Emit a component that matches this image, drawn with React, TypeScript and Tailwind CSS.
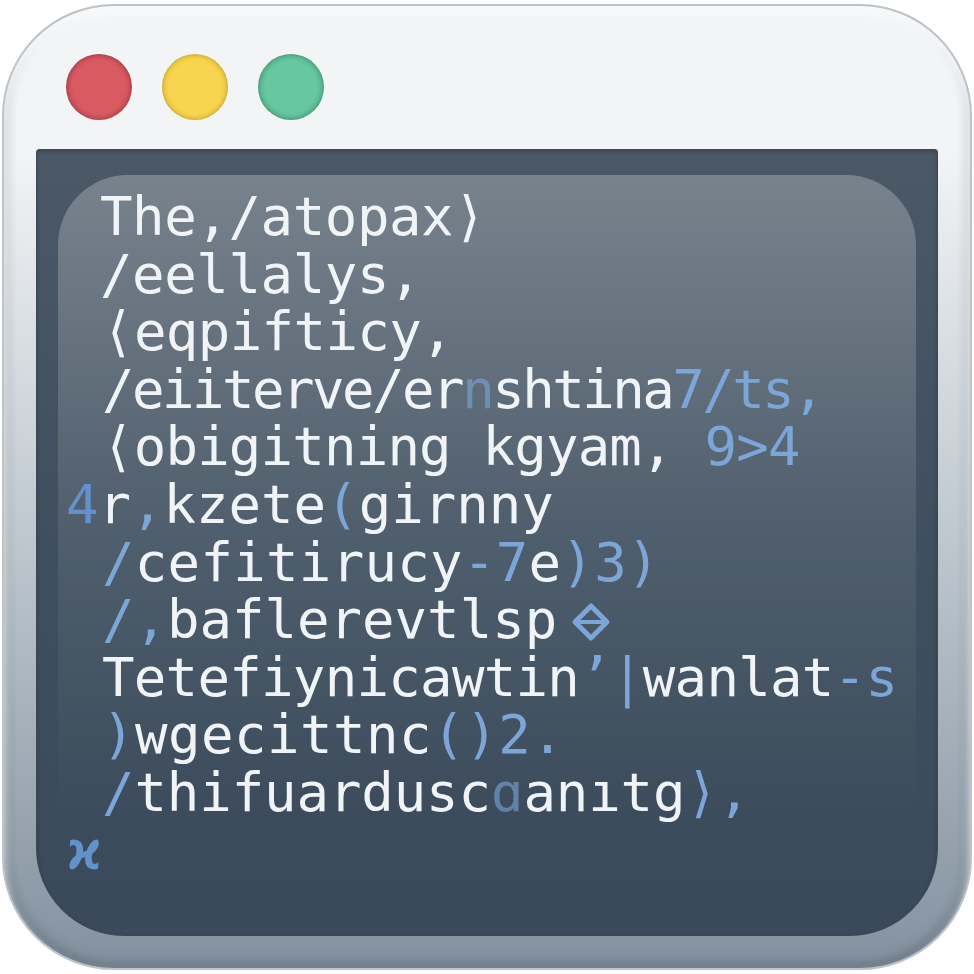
import React from 'react';

type Tone = 'w' | 'b' | 'd' | 's';
type Line = { pad: string; track: string; segs: [string, Tone][] };

const tones: Record<Tone, string> = {
  w: 'text-[#f1f4f6]',
  b: 'text-[#7ca6d8]',
  d: 'text-[#6391cb]',
  s: 'text-[#7ca6d8]/60',
};

const lines: Line[] = [
  { pad: 'pl-[42px]', track: 'tracking-[-0.4px]', segs: [['The,/atopax⟩', 'w']] },
  { pad: 'pl-[42px]', track: 'tracking-[-0.4px]', segs: [['/eellalys,', 'w']] },
  { pad: 'pl-[44px]', track: 'tracking-[-0.6px]', segs: [['⟨eqpifticy,', 'w']] },
  {
    pad: 'pl-[44px]',
    track: 'tracking-[-2.5px]',
    segs: [
      ['/eiiterve/er', 'w'],
      ['n', 's'],
      ['shtina', 'w'],
      ['7/ts,', 'b'],
    ],
  },
  {
    pad: 'pl-[44px]',
    track: 'tracking-[-0.8px]',
    segs: [
      ['⟨obigitning kgyam,', 'w'],
      [' 9>4', 'b'],
    ],
  },
  {
    pad: 'pl-[8px]',
    track: 'tracking-[0px]',
    segs: [
      ['4', 'd'],
      ['r', 'w'],
      [',', 'b'],
      ['kzete', 'w'],
      ['(', 'b'],
      ['girnny', 'w'],
    ],
  },
  {
    pad: 'pl-[44px]',
    track: 'tracking-[0.3px]',
    segs: [
      ['/', 'b'],
      ['cefitirucy', 'w'],
      ['-7', 'b'],
      ['e', 'w'],
      [')3)', 'b'],
    ],
  },
  {
    pad: 'pl-[44px]',
    track: 'tracking-[0px]',
    segs: [
      ['/,', 'b'],
      ['baflerevtlsp', 'w'],
    ],
  },
  {
    pad: 'pl-[44px]',
    track: 'tracking-[-0.7px]',
    segs: [
      ['Tetefiynicawtin', 'w'],
      ['’|', 'b'],
      ['wanlat', 'w'],
      ['-s', 'b'],
    ],
  },
  {
    pad: 'pl-[44px]',
    track: 'tracking-[0.5px]',
    segs: [
      [')', 'b'],
      ['wgecittnc', 'w'],
      ['()2.', 'b'],
    ],
  },
  {
    pad: 'pl-[44px]',
    track: 'tracking-[-0.1px]',
    segs: [
      ['/', 'b'],
      ['thifuardusc', 'w'],
      ['ɑ', 's'],
      ['anıtg', 'w'],
      ['⟩,', 'b'],
    ],
  },
  { pad: 'pl-[10px]', track: 'tracking-[0px]', segs: [['ϰ', 'd']] },
];

const Diamond = () => (
  <svg width="44" height="40" viewBox="0 0 44 40" className="inline-block align-[-4px] ml-[12px]">
    <path d="M22 4 L38 20 L22 36 L6 20 Z" fill="none" stroke="#7ca6d8" strokeWidth="5" strokeLinejoin="round" />
    <path d="M9 20 H35" stroke="#7ca6d8" strokeWidth="4" strokeLinecap="round" />
  </svg>
);

const Dot = ({ color }: { color: string }) => (
  <div className={`w-[66px] h-[66px] rounded-full ${color} shadow-[inset_0_0_4px_rgba(0,0,0,0.25)]`} />
);

export default function App() {
  return (
    <div className="w-[974px] h-[974px] bg-white pt-[4px] pb-[4px] px-[2px] flex">
      <div className="flex-1 flex flex-col rounded-[112px] border-2 border-[#bcc3c9] bg-linear-to-b from-[#f2f4f6] from-15% via-[#bfc8cf] via-55% to-[#8492a0] shadow-[inset_0_6px_10px_rgba(255,255,255,0.9),inset_0_-6px_12px_rgba(40,55,70,0.25),inset_6px_0_10px_rgba(0,0,0,0.06),inset_-6px_0_10px_rgba(0,0,0,0.06)]">
        <div className="h-[143px] flex items-start pt-[48px] pl-[62px] gap-[30px]">
          <Dot color="bg-radial from-[#da5a62] from-55% to-[#a63640]" />
          <Dot color="bg-radial from-[#f7d54e] from-55% to-[#e2b52e]" />
          <Dot color="bg-radial from-[#66c7a0] from-55% to-[#3e9677]" />
        </div>
        <div className="flex-1 mx-[32px] mb-[32px] flex flex-col rounded-t-[3px] rounded-b-[88px] border border-[#3b4856] px-[21px] pt-[25px] bg-linear-to-b from-[#4b5967] via-[#3f4f5f] via-50% to-[#3a4a5a] shadow-[inset_0_2px_4px_rgba(0,0,0,0.2)]">
          <div className="flex-1 rounded-t-[70px] rounded-b-[66px] pt-[13px] bg-linear-to-b from-[rgba(255,255,255,0.25)] via-[rgba(255,255,255,0.09)] via-45% to-transparent to-85% font-['DejaVu_Sans_Mono',monospace] text-[54px] leading-[57.6px] whitespace-pre">
            {lines.map((line, i) => (
              <div key={i} className={`${line.pad} ${line.track} ${i === 11 ? 'font-bold' : ''}`}>
                {line.segs.map(([text, tone], j) => (
                  <span key={j} className={tones[tone]}>
                    {text}
                  </span>
                ))}
                {i === 7 && <Diamond />}
              </div>
            ))}
          </div>
        </div>
      </div>
    </div>
  );
}
